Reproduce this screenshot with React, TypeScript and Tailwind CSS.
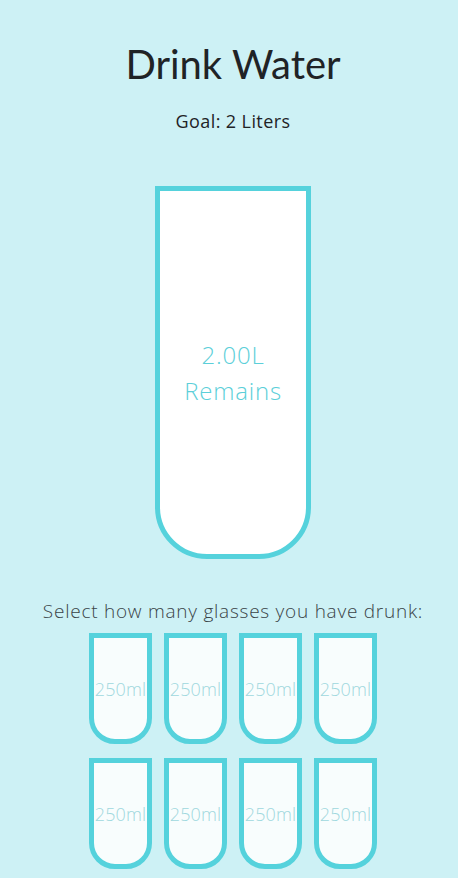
import React from "react";

const glasses = Array.from({ length: 8 });

function SmallCup() {
  return (
    <div className="w-[63px] h-[111px] border-[5px] border-[#55d2dc] rounded-b-[26px] bg-[#f8fdfd] flex items-center justify-center overflow-visible">
      <span className="text-[18px] font-light text-[#9fd8de] tracking-[0.1px] whitespace-nowrap mt-[2px] font-['Open_Sans',sans-serif]">
        250ml
      </span>
    </div>
  );
}

export default function App() {
  return (
    <div
      className="min-h-screen bg-[#cdf1f5] flex flex-col items-center pl-[8px] text-[#1f2326]"
      style={{ fontFamily: "Lato, 'Noto Sans', sans-serif" }}
    >
      <h1 className="mt-[40px] text-[40px] leading-[48px] font-normal">Drink Water</h1>
      <h3 className="mt-[22px] text-[18px] leading-[22px] font-normal tracking-[0.4px] font-['Open_Sans',sans-serif]">
        Goal: 2 Liters
      </h3>

      {/* big cup */}
      <div className="mt-[54px] w-[156px] h-[373px] border-[5px] border-[#55d2dc] rounded-b-[52px] bg-white flex flex-col items-center justify-center">
        <div className="flex flex-col items-center text-[#5ccfd9] text-[24px] leading-[36px] tracking-[0.8px] font-['Open_Sans',sans-serif] font-light">
          <span>2.00L</span>
          <span>Remains</span>
        </div>
      </div>

      <p className="mt-[40px] text-[19px] leading-[24px] font-light text-[#3a4347] tracking-[0.75px] font-['Open_Sans',sans-serif]">
        Select how many glasses you have drunk:
      </p>

      <div className="mt-[10px] grid grid-cols-4 gap-x-[12px] gap-y-[14px]">
        {glasses.map((_, i) => (
          <SmallCup key={i} />
        ))}
      </div>
    </div>
  );
}
